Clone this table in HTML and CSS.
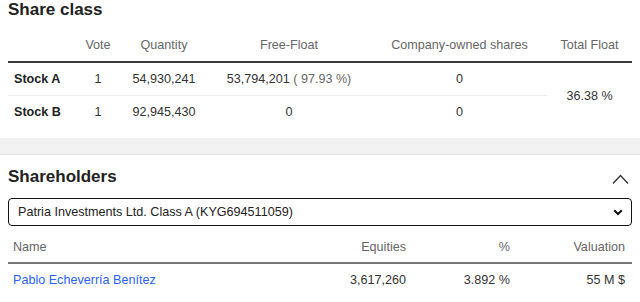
FILE: index.html
```html
<!DOCTYPE html>
<html>
<head>
<meta charset="utf-8">
<link rel="stylesheet" href="styles.css">
</head>
<body>
<section class="block">
  <h2 class="title">Share class</h2>
  <table class="share-table">
    <colgroup>
      <col class="c-name"><col class="c-vote"><col class="c-qty"><col class="c-ff"><col class="c-co"><col class="c-tot">
    </colgroup>
    <thead>
      <tr><th></th><th>Vote</th><th>Quantity</th><th>Free-Float</th><th>Company-owned shares</th><th>Total Float</th></tr>
    </thead>
    <tbody>
      <tr class="sep"><td class="stock">Stock A</td><td>1</td><td>54,930,241</td><td>53,794,201 <span class="pct">( 97.93 %)</span></td><td>0</td><td rowspan="2" class="total">36.38 %</td></tr>
      <tr><td class="stock">Stock B</td><td>1</td><td>92,945,430</td><td>0</td><td>0</td></tr>
    </tbody>
  </table>
</section>
<div class="band"></div>
<section class="block holders">
  <div class="head">
    <h2 class="title">Shareholders</h2>
    <svg class="collapse" width="17" height="10" viewBox="0 0 17 10"><path d="M1 9.5 L8.5 1.5 L16 9.5" fill="none" stroke="#333" stroke-width="1.3"/></svg>
  </div>
  <div class="select">
    <span>Patria Investments Ltd. Class A (KYG694511059)</span>
    <svg width="10" height="7" viewBox="0 0 10 7"><path d="M1.2 1.2 L5 5 L8.8 1.2" fill="none" stroke="#111" stroke-width="2"/></svg>
  </div>
  <table class="hold-table">
    <colgroup><col><col class="c-eq"><col class="c-pc"><col class="c-val"></colgroup>
    <thead>
      <tr><th class="left">Name</th><th>Equities</th><th>%</th><th>Valuation</th></tr>
    </thead>
    <tbody>
      <tr><td class="left"><a href="#">Pablo Echeverría Benítez</a></td><td>3,617,260</td><td>3.892 %</td><td>55 M $</td></tr>
    </tbody>
  </table>
</section>
</body>
</html>
```

FILE: styles.css
```css
html, body { margin: 0; padding: 0; background: #fff; }
body {
  font-family: "Liberation Sans", Arial, sans-serif;
  font-size: 12.6px;
  color: #333;
}
.block { padding: 0 8px; }
.title {
  margin: 0;
  font-size: 17px;
  line-height: 20px;
  font-weight: bold;
  color: #222;
}
table { width: 100%; border-collapse: collapse; table-layout: fixed; }
.share-table { margin-top: 8px; }
.c-name { width: 66px; }
.c-vote { width: 48px; }
.c-qty { width: 84px; }
.c-ff { width: 166px; }
.c-co { width: 175px; }
.c-tot { width: 85px; }
.share-table th {
  font-weight: normal;
  color: #666;
  height: 33px;
  padding: 0;
  text-align: center;
  border-bottom: 2px solid #3a3a3a;
}
.share-table td {
  text-align: center;
  height: 32px;
  padding: 0;
  color: #333;
}
.share-table tr.sep td { border-bottom: 1px solid #eee; }
.share-table tr.sep td.total { border-bottom: none; }
.share-table td.stock { text-align: left; padding-left: 6px; font-weight: bold; color: #222; }
.pct { color: #666; }
.band {
  margin-top: 10px;
  height: 16px;
  background: #f2f2f2;
  border-bottom: 1px solid #e6e6e6;
}
.holders { padding-top: 12px; }
.head { display: flex; justify-content: space-between; align-items: center; }
.collapse { margin-right: 3px; margin-top: 4px; }
.select {
  margin-top: 11px;
  height: 28px;
  box-sizing: border-box;
  border: 1.5px solid #111;
  border-radius: 4px;
  display: flex;
  align-items: center;
  justify-content: space-between;
  padding: 0 8px 0 9px;
  color: #222;
  font-size: 12.6px;
}
.hold-table { margin-top: 5px; }
.c-eq { width: 115px; }
.c-pc { width: 104px; }
.c-val { width: 115px; }
.hold-table th {
  font-weight: normal;
  color: #666;
  height: 31px;
  padding: 0 7px 0 5px;
  text-align: right;
  border-bottom: 2px solid #777;
}
.hold-table td {
  height: 32px;
  padding: 0 7px 0 5px;
  text-align: right;
  color: #333;
}
.hold-table .left { text-align: left; }
.hold-table a { color: #2962ff; text-decoration: none; }
```
